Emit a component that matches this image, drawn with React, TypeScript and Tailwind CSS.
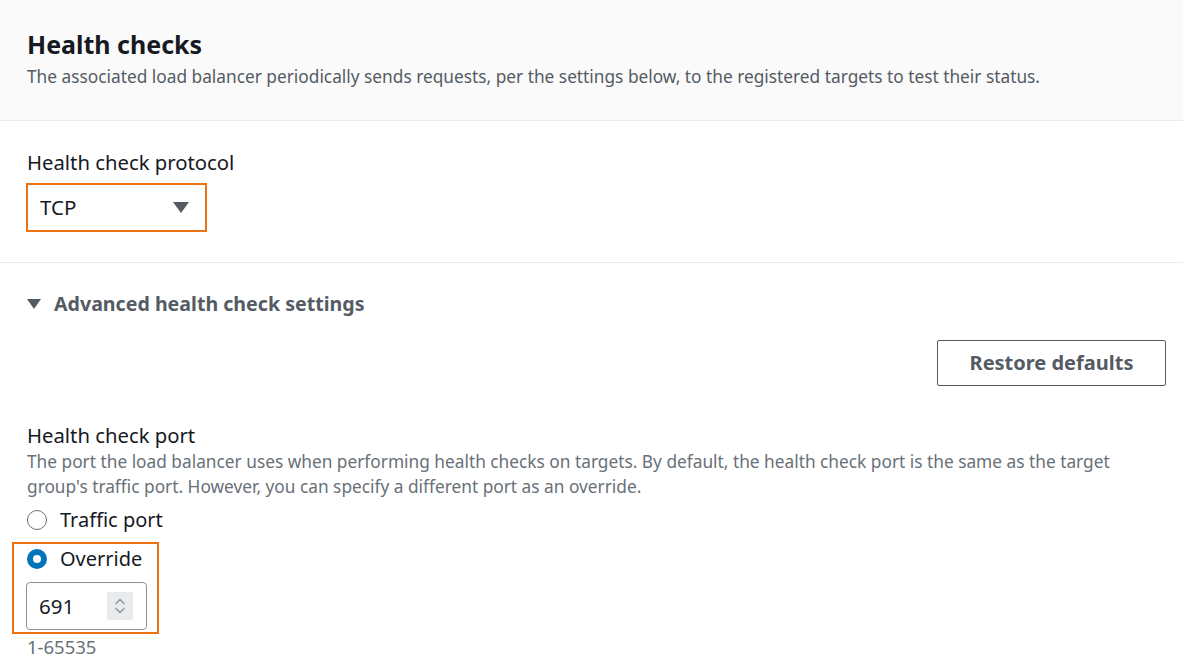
const font = { fontFamily: '"Noto Sans", "Open Sans", Arial, sans-serif' };

function Radio({ checked, label }: { checked?: boolean; label: string }) {
    return (
        <label className="flex items-center gap-[13px] h-[32px]">
            {checked ? (
                <span className="w-[20px] h-[20px] rounded-full bg-[#0073bb] flex items-center justify-center">
                    <span className="w-[8px] h-[8px] rounded-full bg-white" />
                </span>
            ) : (
                <span className="w-[20px] h-[20px] rounded-full border-[1.5px] border-[#687078] bg-white" />
            )}
            <span className="text-[20px] text-[#16191f]">{label}</span>
        </label>
    );
}

export default function App() {
    return (
        <div className="w-[1183px] h-[671px] bg-white overflow-hidden" style={font}>
            {/* Header */}
            <div className="h-[121px] bg-[#fafafa] border-b border-[#eaeded] pl-[27px] pr-[17px] pt-[27px]">
                <h2 className="text-[25px] leading-[34px] font-bold text-[#16191f]">Health checks</h2>
                <p className="text-[17.3px] leading-[32px] text-[#545b64]">
                    The associated load balancer periodically sends requests, per the settings below, to the registered targets to test their status.
                </p>
            </div>

            {/* Protocol */}
            <div className="h-[142px] border-b border-[#eaeded] pl-[27px] pr-[17px] pt-[27px]">
                <div className="text-[20.3px] leading-[28px] text-[#16191f]">Health check protocol</div>
                <div className="mt-[7px] ml-[-1px] w-[181px] h-[49px] border-2 border-[#ec7211] flex items-center justify-between pl-[12px] pr-[16px]">
                    <span className="text-[20.5px] text-[#16191f]">TCP</span>
                    <span className="w-0 h-0 border-l-[8px] border-r-[8px] border-t-[11px] border-l-transparent border-r-transparent border-t-[#545b64]" />
                </div>
            </div>

            {/* Advanced */}
            <div className="pl-[27px] pr-[17px]">
                <div className="h-[77px] flex items-center gap-[13px] pt-[4px]">
                    <span className="w-0 h-0 border-l-[7px] border-r-[7px] border-t-[10px] border-l-transparent border-r-transparent border-t-[#545b64]" />
                    <span className="text-[19.6px] font-bold text-[#545b64]">Advanced health check settings</span>
                </div>
                <div className="flex justify-end">
                    <button className="w-[229px] h-[46px] border border-[#545b64] rounded-[2px] text-[20px] font-bold text-[#545b64] bg-white">
                        Restore defaults
                    </button>
                </div>

                <div className="mt-[35px] text-[20.3px] leading-[28px] text-[#16191f]">Health check port</div>
                <p className="text-[17.3px] leading-[25px] text-[#687078] pr-[40px]">
                    The port the load balancer uses when performing health checks on targets. By default, the health check port is the same as the target group's traffic port. However, you can specify a different port as an override.
                </p>
                <div className="mt-[5px]">
                    <Radio label="Traffic port" />
                </div>
                <div className="ml-[-15px] mt-[6px] w-[147px] h-[92px] border-2 border-[#ec7211] pl-[12px]">
                    <div className="mt-[-1px] pl-[1px]">
                        <Radio checked label="Override" />
                    </div>
                    <div className="mt-[7px] w-[121px] h-[48px] border border-[#879596] rounded-[4px] flex items-center justify-between pl-[12px] pr-[13px]">
                        <span className="text-[20.5px] text-[#16191f]">691</span>
                        <span className="w-[26px] h-[28px] bg-[#e9ebed] flex items-center justify-center">
                            <svg width="12" height="20" viewBox="0 0 12 20" fill="none" stroke="#8d99a8" strokeWidth="1.6" strokeLinecap="round" strokeLinejoin="round">
                                <path d="M2 7.5 6 3.5 10 7.5" />
                                <path d="M2 12.5 6 16.5 10 12.5" />
                            </svg>
                        </span>
                    </div>
                </div>
                <div className="mt-[1px] text-[18.5px] leading-[24px] text-[#687078]">1-65535</div>
            </div>
        </div>
    );
}
